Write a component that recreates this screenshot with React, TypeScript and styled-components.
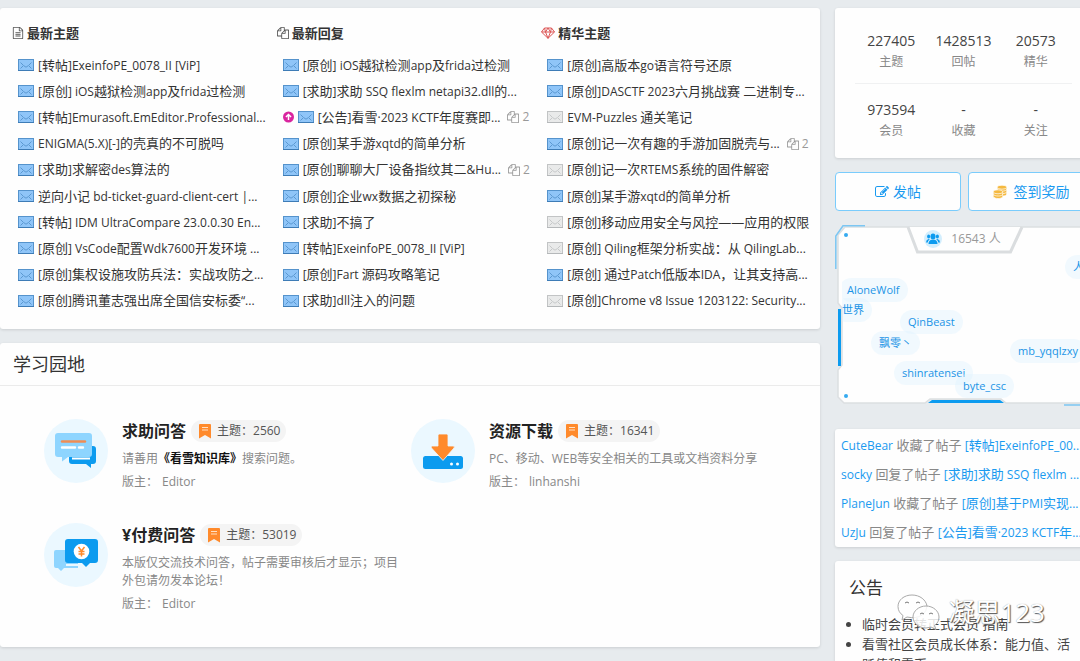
import React from "react";
import styled, { createGlobalStyle } from "styled-components";

const Global = createGlobalStyle`
  *, *::before, *::after { box-sizing: border-box; }
  body {
    margin: 0;
    background: #e7ebee;
    color: #333;
    font-family: "Open Sans", "Noto Sans CJK SC", sans-serif;
    font-size: 13px;
    line-height: 20px;
  }
  a { color: inherit; text-decoration: none; }
  h2, h3, p, ul, dl, dd, dt { margin: 0; padding: 0; }
  svg { display: block; flex: none; }
`;

const Page = styled.div`
  position: relative;
  height: 100vh;
  overflow: hidden;
`;

const Layout = styled.div`
  display: grid;
  grid-template-columns: minmax(0, 1fr) 259px;
  gap: 15px;
  align-items: start;
  margin-right: -14px;
  padding-top: 8px;
`;

const Column = styled.div`
  display: flex;
  flex-direction: column;
  gap: 14px;
  min-width: 0;
`;

const Card = styled.section`
  background: #fefefe;
  border-radius: 3px;
  box-shadow: 0 1px 3px rgba(0, 0, 0, 0.12);
`;

const Latin = styled.span`
  font-size: 12px;
`;

const TopicCard = styled(Card)`
  display: grid;
  grid-template-columns: repeat(3, minmax(0, 1fr));
  padding: 15px 14px 15px 12px;
`;

const TopicHeading = styled.h2`
  display: flex;
  align-items: center;
  gap: 3px;
  margin-bottom: 9px;
  font-size: 13px;
  font-weight: 700;
  line-height: 20px;
`;

const TopicList = styled.ul`
  display: grid;
  grid-auto-rows: 1fr;
  min-height: 262px;
  list-style: none;
  padding-left: 6px;
`;

const TopicRow = styled.li`
  display: flex;
  align-items: center;
  gap: 4px;
  white-space: pre;
`;

const Pages = styled.span`
  display: flex;
  align-items: center;
  gap: 3px;
  margin-left: 3px;
  color: #999;
  font-size: 12px;
`;

const BoardHeader = styled.h2`
  padding: 8px 13px;
  border-bottom: 1px solid #ebebeb;
  font-size: 18px;
  font-weight: 400;
  line-height: 26px;
`;

const BoardGrid = styled.div`
  display: grid;
  grid-template-columns: repeat(2, minmax(0, 1fr));
  row-gap: 32px;
  padding: 33px 42px 34px 44px;
`;

const Board = styled.article`
  display: flex;
  gap: 14px;
`;

const BoardBody = styled.div`
  flex: 1;
  min-width: 0;
  padding-right: 12px;
  color: #888;
  font-size: 12px;
  line-height: 18px;
`;

const BoardTitle = styled.h3`
  display: flex;
  align-items: center;
  gap: 5px;
  height: 24px;
  color: #222;
  font-size: 16px;
  font-weight: 700;
  white-space: nowrap;
`;

const CountPill = styled.span`
  display: flex;
  align-items: center;
  gap: 6px;
  height: 22px;
  padding: 0 6px 0 8px;
  border-radius: 11px;
  background: #f4f4f4;
  color: #555;
  font-size: 12px;
  font-weight: 400;
`;

const BoardText = styled.p`
  margin-top: 7px;
  b { color: #111; }
`;

const Moderator = styled.p`
  display: flex;
  gap: 4px;
  margin-top: 5px;
`;

const StatCard = styled(Card)`
  padding: 6px 22px 6px 20px;
`;

const StatRow = styled.dl`
  display: grid;
  grid-template-columns: repeat(3, 1fr);
  padding: 16px 0 11px;
  text-align: center;
  & + & { padding-top: 15px; border-top: 1px solid #f0f1f2; }
`;

const Stat = styled.div`
  display: flex;
  flex-direction: column-reverse;
`;

const StatLabel = styled.dt`
  color: #888;
  font-size: 12px;
  line-height: 20px;
`;

const StatValue = styled.dd`
  color: #444;
  font-size: 14px;
  line-height: 22px;
`;

const Actions = styled.div`
  display: grid;
  grid-template-columns: 1fr 1fr;
  gap: 7px;
`;

const ActionButton = styled.button`
  display: flex;
  align-items: center;
  justify-content: center;
  gap: 4px;
  height: 39px;
  padding: 0;
  border: 1px solid #7accfc;
  border-radius: 4px;
  background: #fefefe;
  color: #1a9af0;
  font: inherit;
  font-size: 14px;
`;

const Online = styled.section`
  position: relative;
  height: 182px;
  margin-bottom: 8px;
`;

const Frame = styled.svg`
  position: absolute;
  inset: 0;
`;

const OnlineCount = styled.h2`
  position: relative;
  display: flex;
  align-items: center;
  justify-content: center;
  gap: 9px;
  height: 28px;
  padding-right: 4px;
  color: #999;
  font-size: 12px;
  font-weight: 400;
`;

const Cloud = styled.div`
  position: absolute;
  inset: 27px 0 6px 7px;
  overflow: hidden;
`;

const Tag = styled.a<{ $x: number; $y: number }>`
  position: absolute;
  left: ${(p) => p.$x}px;
  top: ${(p) => p.$y}px;
  padding: 0 8px;
  border-radius: 12px;
  background: rgba(222, 243, 255, 0.4);
  color: #1a94e6;
  font-size: 11px;
  line-height: 24px;
  white-space: nowrap;
`;

const Feed = styled(Card)`
  padding: 2px 0 0 6px;
`;

const FeedRow = styled.p`
  height: 29px;
  color: #888;
  line-height: 29px;
  white-space: pre;
  a { color: #1a9af0; }
`;

const Notice = styled(Card)`
  padding: 14px 16px 20px 14px;
`;

const NoticeTitle = styled.h2`
  margin-bottom: 13px;
  font-size: 17px;
  font-weight: 400;
  line-height: 26px;
`;

const NoticeList = styled.ul`
  padding-left: 13px;
  color: #444;
`;

const Watermark = styled.div`
  position: absolute;
  right: 35px;
  bottom: 31px;
  display: flex;
  align-items: center;
  gap: 8px;
  color: #fff;
  font-size: 26px;
  line-height: 36px;
  text-shadow: 1px 1px 1px #555, 0 0 1px #999;
`;

const PATHS = {
  file: "M1596 380q28 28 48 76t20 88v1152q0 40-28 68t-68 28h-1344q-40 0-68-28t-28-68v-1600q0-40 28-68t68-28h896q40 0 88 20t76 48zm-444-244v376h376q-10-29-22-41l-313-313q-12-12-41-22zm384 1528v-1024h-416q-40 0-68-28t-28-68v-416h-768v1536h1280zm-1024-864q0-14 9-23t23-9h704q14 0 23 9t9 23v64q0 14-9 23t-23 9h-704q-14 0-23-9t-9-23v-64zm736 224q14 0 23 9t9 23v64q0 14-9 23t-23 9h-704q-14 0-23-9t-9-23v-64q0-14 9-23t23-9h704zm0 256q14 0 23 9t9 23v64q0 14-9 23t-23 9h-704q-14 0-23-9t-9-23v-64q0-14 9-23t23-9h704z",
  files: "M1696 384q40 0 68 28t28 68v1216q0 40-28 68t-68 28h-960q-40 0-68-28t-28-68v-288h-544q-40 0-68-28t-28-68v-672q0-40 20-88t48-76l408-408q28-28 76-48t88-20h416q40 0 68 28t28 68v328q68-40 128-40h416zm-544 213l-299 299h299v-299zm-640-384l-299 299h299v-299zm196 647l316-316v-416h-384v416q0 40-28 68t-68 28h-416v640h512v-256q0-40 20-88t48-76zm956 804v-1152h-384v416q0 40-28 68t-68 28h-416v640h896z",
  edit: "M888 1184l116-116-152-152-116 116v56h96v96h56zm440-720q-16-16-33 1l-350 350q-17 17-1 33t33-1l350-350q17-17 1-33zm80 594v190q0 119-84.5 203.5t-203.5 84.5h-832q-119 0-203.5-84.5t-84.5-203.5v-832q0-119 84.5-203.5t203.5-84.5h832q63 0 117 25 15 7 18 23 3 17-9 29l-49 49q-14 14-32 8-23-6-45-6h-832q-66 0-113 47t-47 113v832q0 66 47 113t113 47h832q66 0 113-47t47-113v-126q0-13 9-22l64-64q15-15 35-7t20 29zm-96-738l288 288-672 672h-288v-288zm444 132l-92 92-288-288 92-92q28-28 68-28t68 28l152 152q28 28 28 68t-28 68z",
};

function Glyph({ name, size = 12, color = "currentColor" }: { name: keyof typeof PATHS; size?: number; color?: string }) {
  return (
    <svg width={size} height={size} viewBox="0 0 1792 1792" fill={color} aria-hidden="true">
      <path d={PATHS[name]} />
    </svg>
  );
}

function Diamond() {
  return (
    <svg width="14" height="12" viewBox="0 0 14 12" fill="none" stroke="#dc5555" strokeWidth="1" strokeLinejoin="round" aria-hidden="true">
      <path d="M3.500 1h7l3 4L7 11.300.5 5z M.5 5h13 M3.500 1l1 4L7 11.300 9.500 5l1-4 M4.500 5L7 1l2.500 4" />
    </svg>
  );
}

function Mail({ read }: { read?: boolean }) {
  const fill = read ? "#e9eaea" : "#8fc5f8";
  const line = read ? "#c2c4c5" : "#5593cc";
  return (
    <svg width="16" height="12" viewBox="0 0 16 12" fill="none" stroke={line} aria-hidden="true">
      <rect x="0.500" y="0.500" width="15" height="11" fill={fill} />
      <path d="M2.500 3.500L5.500 6.500 8 8.200 10.500 6.500 13.500 3.500M2.500 9.500L5 7M13.500 9.500L11 7" strokeWidth="0.900" />
      <path d="M0 11.500h16" stroke={read ? "#b5b8ba" : "#3e7cb6"} />
    </svg>
  );
}

function TopMark() {
  return (
    <svg width="11" height="12" viewBox="0 0 12 12" aria-hidden="true">
      <circle cx="6" cy="6" r="6" fill="#d9259f" />
      <path d="M6 9.200V3.500M3.200 6L6 3.200 8.800 6" stroke="#fff" strokeWidth="1.600" fill="none" />
    </svg>
  );
}

function Bookmark() {
  return (
    <svg width="12" height="15" viewBox="0 0 12 15" aria-hidden="true">
      <path d="M1 0h10q1 0 1 1v13.500l-6-3.500-6 3.500V1q0-1 1-1z" fill="#ff8a2b" />
      <path d="M3 3.500h6M3 6h6" stroke="#ffe0c4" strokeWidth="1" />
    </svg>
  );
}

function Coins() {
  return (
    <svg width="17" height="14" viewBox="0 0 17 14" fill="#f5b93f" stroke="#fff" strokeWidth="0.700" aria-hidden="true">
      <path d="M4.500 7.500v2.200c1 2 9 2 9.200-.5V7z" />
      <path d="M4.500 5v2.200c1 2 9 2 9.200-.5V4.500z" />
      <path d="M4.500 2.500v2.200c1 2 9 2 9.200-.5V2z" />
      <ellipse cx="9" cy="2.200" rx="4.700" ry="2" />
      <path d="M.3 9.500v2.200c1 2.400 9 2.400 9.400 0V9.500z" />
      <path d="M.3 7v2.200c1 2.400 9 2.400 9.400 0V7z" />
      <ellipse cx="5" cy="6.800" rx="4.700" ry="2" />
    </svg>
  );
}

function People() {
  return (
    <svg width="18" height="18" viewBox="0 0 18 18" aria-hidden="true">
      <circle cx="9" cy="9" r="9" fill="#d3eefd" />
      <g fill="#0c9bef">
        <ellipse cx="9" cy="6.500" rx="2.500" ry="3" />
        <path d="M4.500 14q0-3.500 3-4.200h3q3 .7 3 4.200z" />
        <ellipse cx="4.600" cy="6.500" rx="1.500" ry="2" />
        <ellipse cx="13.400" cy="6.500" rx="1.500" ry="2" />
        <path d="M2 12.500q0-3 2.500-3.600l1.300.6Q3.800 10.700 3.700 12.500zM16 12.500q0-3-2.500-3.600l-1.300.6q2 1.200 2.100 3z" />
      </g>
    </svg>
  );
}

type Kind = "chat" | "download" | "paid";

function BoardIcon({ kind }: { kind: Kind }) {
  return (
    <svg width="64" height="64" viewBox="0 0 64 64" aria-hidden="true">
      <circle cx="32" cy="32" r="32" fill="#ebf8ff" />
      {kind === "chat" && (
        <>
          <path d="M27 27h22q3 0 3 3v12q0 3-3 3h-2v4l-5-4H28q-3 0-3-3v-4z" fill="#0c9bef" />
          <path d="M28 39.500h18" stroke="#fff" strokeWidth="2" />
          <path d="M14 14h31q3 0 3 3v18q0 3-3 3H24l-6 4.500V38h-4q-3 0-3-3V17q0-3 3-3z" fill="#8ed5ff" />
          <path d="M18 22.500h23" stroke="#ef8d55" strokeWidth="2.400" strokeLinecap="round" />
          <path d="M18 28.500h13M35 28.500h4" stroke="#fff" strokeWidth="2.400" strokeLinecap="round" />
        </>
      )}
      {kind === "download" && (
        <>
          <rect x="12" y="37" width="40" height="13" rx="2.500" fill="#0c9bef" />
          <path d="M28.500 15h7q1.500 0 1.500 1.500V27h5q2.500 0 1 2L32 41.500 20.500 29q-1.500-2 1-2H27V16.500q0-1.500 1.500-1.500z" fill="#ff8a2b" stroke="#ebf8ff" strokeWidth="0.800" />
          <circle cx="40.500" cy="45" r="1.500" fill="#fff" />
          <circle cx="46.500" cy="45" r="1.500" fill="#fff" />
        </>
      )}
      {kind === "paid" && (
        <>
          <path d="M12 27h22v18H20l-3 3-3-3h-2q-2 0-2-2V29q0-2 2-2z" fill="#8ed5ff" />
          <path d="M22 42h14" stroke="#ebf8ff" strokeWidth="2" />
          <path d="M24 16h27q3 0 3 3v18q0 3-3 3h-5l-4 4-4-4H24q-3 0-3-3V19q0-3 3-3z" fill="#0c9bef" />
          <circle cx="37.500" cy="28.500" r="7.800" fill="#fff" />
          <path d="M34.500 24l3 4 3-4M37.500 28v5.500M34.500 28.500h6M34.500 31h6" stroke="#ff8a2b" strokeWidth="1.500" fill="none" />
        </>
      )}
    </svg>
  );
}

/* Sets Latin runs one step smaller than the Chinese text around them. */
function Mixed({ text }: { text: string }) {
  return (
    <>
      {text.split(/([\x20-\x7e·“]+)/).map((part, i) => (i % 2 ? <Latin key={i}>{part}</Latin> : part))}
    </>
  );
}

type Topic = { text: string; read?: boolean; top?: boolean; pages?: number };

const columns: { title: string; icon: React.ReactNode; topics: Topic[] }[] = [
  {
    title: "最新主题",
    icon: <Glyph name="file" color="#555" />,
    topics: [
      { text: "[转帖]ExeinfoPE_0078_II [ViP]" },
      { text: "[原创] iOS越狱检测app及frida过检测" },
      { text: "[转帖]Emurasoft.EmEditor.Professional..." },
      { text: "ENIGMA(5.X)[-]的壳真的不可脱吗" },
      { text: "[求助]求解密des算法的" },
      { text: "逆向小记 bd-ticket-guard-client-cert |..." },
      { text: "[转帖] IDM UltraCompare 23.0.0.30 En..." },
      { text: "[原创] VsCode配置Wdk7600开发环境 ..." },
      { text: "[原创]集权设施攻防兵法：实战攻防之..." },
      { text: "[原创]腾讯董志强出席全国信安标委“..." },
    ],
  },
  {
    title: "最新回复",
    icon: <Glyph name="files" color="#555" />,
    topics: [
      { text: "[原创] iOS越狱检测app及frida过检测" },
      { text: "[求助]求助 SSQ flexlm netapi32.dll的..." },
      { text: "[公告]看雪·2023 KCTF年度赛即...", top: true, pages: 2 },
      { text: "[原创]某手游xqtd的简单分析" },
      { text: "[原创]聊聊大厂设备指纹其二&Hu...", pages: 2 },
      { text: "[原创]企业wx数据之初探秘" },
      { text: "[求助]不搞了" },
      { text: "[转帖]ExeinfoPE_0078_II [ViP]" },
      { text: "[原创]Fart 源码攻略笔记" },
      { text: "[求助]dll注入的问题" },
    ],
  },
  {
    title: "精华主题",
    icon: <Diamond />,
    topics: [
      { text: "[原创]高版本go语言符号还原" },
      { text: "[原创]DASCTF 2023六月挑战赛 二进制专..." },
      { text: "EVM-Puzzles 通关笔记", read: true },
      { text: "[原创]记一次有趣的手游加固脱壳与...", pages: 2 },
      { text: "[原创]记一次RTEMS系统的固件解密", read: true },
      { text: "[原创]某手游xqtd的简单分析" },
      { text: "[原创]移动应用安全与风控——应用的权限", read: true },
      { text: "[原创] Qiling框架分析实战：从 QilingLab...", read: true },
      { text: "[原创] 通过Patch低版本IDA，让其支持高..." },
      { text: "[原创]Chrome v8 Issue 1203122: Security...", read: true },
    ],
  },
];

const boards: { kind: Kind; title: string; count: number; text: React.ReactNode; moderator: string }[] = [
  { kind: "chat", title: "求助问答", count: 2560, text: <>请善用<b>《看雪知识库》</b>搜索问题。</>, moderator: "Editor" },
  { kind: "download", title: "资源下载", count: 16341, text: "PC、移动、WEB等安全相关的工具或文档资料分享", moderator: "linhanshi" },
  { kind: "paid", title: "¥付费问答", count: 53019, text: "本版仅交流技术问答，帖子需要审核后才显示；项目外包请勿发本论坛！", moderator: "Editor" },
];

const stats = [
  [["227405", "主题"], ["1428513", "回帖"], ["20573", "精华"]],
  [["973594", "会员"], ["-", "收藏"], ["-", "关注"]],
];

const tags: [string, number, number][] = [
  ["人生", 223, 3],
  ["AloneWolf", -3, 26],
  ["世界", -8, 46],
  ["QinBeast", 58, 58],
  ["飘零丶", 29, 79],
  ["mb_yqqlzxy", 168, 87],
  ["shinratensei", 52, 109],
  ["byte_csc", 113, 122],
];

const feed = [
  ["CuteBear", "收藏了帖子", "[转帖]ExeinfoPE_00..."],
  ["socky", "回复了帖子", "[求助]求助 SSQ flexlm ..."],
  ["PlaneJun", "收藏了帖子", "[原创]基于PMI实现..."],
  ["UzJu", "回复了帖子", "[公告]看雪·2023 KCTF年..."],
];

export default function App() {
  return (
    <Page>
      <Global />
      <Layout>
        <Column as="main">
          <TopicCard>
            {columns.map((c) => (
              <div key={c.title}>
                <TopicHeading>{c.icon}{c.title}</TopicHeading>
                <TopicList>
                  {c.topics.map((t) => (
                    <TopicRow key={t.text}>
                      {t.top && <TopMark />}
                      <Mail read={t.read} />
                      <a href="#"><Mixed text={t.text} /></a>
                      {t.pages && <Pages><Glyph name="files" />{t.pages}</Pages>}
                    </TopicRow>
                  ))}
                </TopicList>
              </div>
            ))}
          </TopicCard>
          <Card>
            <BoardHeader>学习园地</BoardHeader>
            <BoardGrid>
              {boards.map((b) => (
                <Board key={b.kind}>
                  <BoardIcon kind={b.kind} />
                  <BoardBody>
                    <BoardTitle>
                      <a href="#">{b.title}</a>
                      <CountPill><Bookmark />主题：{b.count}</CountPill>
                    </BoardTitle>
                    <BoardText>{b.text}</BoardText>
                    <Moderator>版主：<a href="#">{b.moderator}</a></Moderator>
                  </BoardBody>
                </Board>
              ))}
            </BoardGrid>
          </Card>
        </Column>

        <Column as="aside">
          <StatCard>
            {stats.map((row, i) => (
              <StatRow key={i}>
                {row.map(([value, label]) => (
                  <Stat key={label}>
                    <StatLabel>{label}</StatLabel>
                    <StatValue>{value}</StatValue>
                  </Stat>
                ))}
              </StatRow>
            ))}
          </StatCard>
          <Actions>
            <ActionButton type="button"><Glyph name="edit" size={14} />发帖</ActionButton>
            <ActionButton type="button"><Coins />签到奖励</ActionButton>
          </Actions>
          <Online>
            <Frame width="259" height="182" viewBox="0 0 259 182" fill="none" aria-hidden="true">
              <path d="M3 10L10 2H249L256 10V78L252 83V140L256 145V171L249 178H171L166 174H95L90 178H9L3 172V145L7 140V83L3 78Z" fill="#fefefe" stroke="#dcdfe1" strokeWidth="1.500" />
              <path d="M3 84h3v57H3zM93 178l4-3h68l4 3z" fill="#0c9bef" />
              <path d="M73 2L82.500 27H175.500L187 2" fill="#fefefe" stroke="#dadddf" strokeWidth="3" />
              <path d="M.8 44V11L8 .8h22M229 180h21l7-9" stroke="#7cc6f2" strokeWidth="1.500" />
              <circle cx="11" cy="10" r="2" fill="#35aaf0" />
              <circle cx="11" cy="171" r="2" fill="#35aaf0" />
            </Frame>
            <OnlineCount><People />16543 人</OnlineCount>
            <Cloud>
              {tags.map(([name, x, y]) => <Tag key={name} href="#" $x={x} $y={y}>{name}</Tag>)}
            </Cloud>
          </Online>
          <Feed>
            {feed.map(([user, action, topic]) => (
              <FeedRow key={user}><a href="#"><Mixed text={user} /></a> {action} <a href="#"><Mixed text={topic} /></a></FeedRow>
            ))}
          </Feed>
          <Notice>
            <NoticeTitle>公告</NoticeTitle>
            <NoticeList>
              <li><a href="#">临时会员转正式会员 指南</a></li>
              <li><a href="#">看雪社区会员成长体系：能力值、活跃值和雪币</a></li>
            </NoticeList>
          </Notice>
        </Column>
      </Layout>
      <Watermark>
        <svg width="43" height="36" viewBox="0 0 43 36" fill="#fff" fillOpacity="0.850" stroke="#aaa" strokeWidth="1" aria-hidden="true">
          <path d="M15 1C7 1 1 6 1 12.500c0 4 2 7 5 9L5 26l5-3q9 2 15-2 5-4 5-9C29 6 23 1 15 1z" />
          <path d="M29 12c-7 0-13 5-13 11s6 11 13 11l5-1 5 2.500-1.500-4c3-2 4.500-5 4.500-8.500 0-6-6-11-13-11z" />
          <path d="M8 9q2-2 4 0M19 9q2-2 4 0M23 20q2-2 4 0M32 20q2-2 4 0" fill="none" stroke="#777" />
        </svg>
        凝思123
      </Watermark>
    </Page>
  );
}
